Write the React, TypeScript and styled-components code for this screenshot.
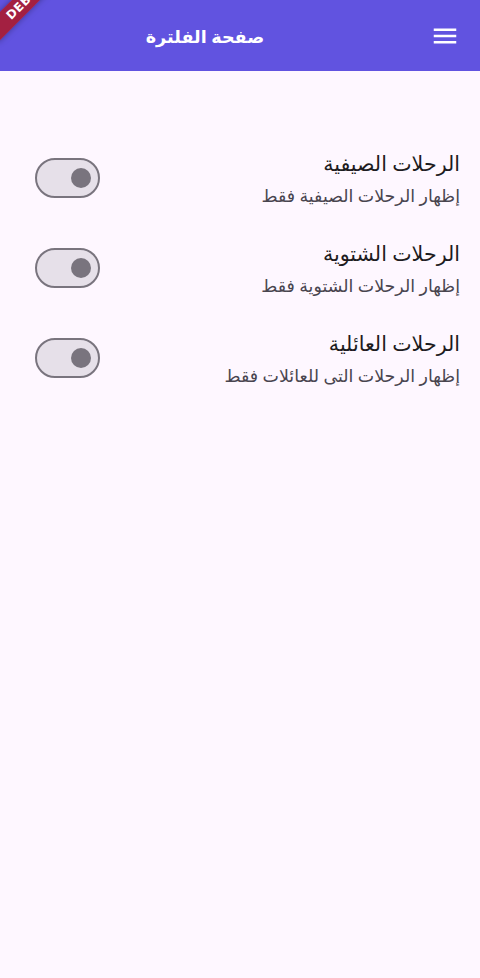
import React, { useState } from "react";
import styled, { createGlobalStyle } from "styled-components";

const GlobalStyle = createGlobalStyle`
  html, body {
    margin: 0;
    padding: 0;
    background: #fef7ff;
  }
  body {
    font-family: "Noto Sans", "DejaVu Sans", sans-serif;
  }
  * { box-sizing: border-box; }
`;

const Page = styled.div`
  position: relative;
  width: 480px;
  min-height: 978px;
  background: #fef7ff;
  direction: rtl;
  overflow: hidden;
`;

const AppBar = styled.header`
  display: flex;
  align-items: center;
  height: 71px;
  background: #6153e0;
  color: #ffffff;
`;

const MenuButton = styled.button`
  width: 70px;
  height: 70px;
  display: flex;
  align-items: center;
  justify-content: center;
  border: none;
  background: transparent;
  padding: 0;
  flex: none;
`;

const Title = styled.h1`
  flex: 1;
  margin: 0;
  text-align: center;
  font-size: 17.6px;
  font-weight: 700;
  color: #ffffff;
`;

const List = styled.main`
  display: flex;
  flex-direction: column;
  padding-top: 62px;
`;

const Row = styled.label`
  display: flex;
  align-items: center;
  height: 90px;
  padding: 0 20px;
  gap: 16px;
  cursor: pointer;
`;

const Texts = styled.div`
  flex: 1;
  display: flex;
  flex-direction: column;
  gap: 8px;
`;

const RowTitle = styled.div`
  font-size: 20.6px;
  line-height: 26px;
  color: #1d1b20;
`;

const RowSubtitle = styled.div`
  font-size: 17.4px;
  line-height: 22px;
  color: #49454f;
`;

const Track = styled.span<{ $on: boolean }>`
  position: relative;
  flex: none;
  width: 65px;
  height: 40px;
  margin-left: 15px;
  border-radius: 20px;
  border: 2.5px solid ${(p) => (p.$on ? "#6153e0" : "#79747e")};
  background: ${(p) => (p.$on ? "#6153e0" : "#e6e0e9")};
`;

const Thumb = styled.span<{ $on: boolean }>`
  position: absolute;
  top: 50%;
  width: ${(p) => (p.$on ? 30 : 20)}px;
  height: ${(p) => (p.$on ? 30 : 20)}px;
  margin-top: ${(p) => (p.$on ? -15 : -10)}px;
  right: ${(p) => (p.$on ? 27 : 7.5)}px;
  border-radius: 50%;
  background: ${(p) => (p.$on ? "#ffffff" : "#79747e")};
`;

const Ribbon = styled.div`
  position: absolute;
  left: -24px;
  top: -10px;
  width: 100px;
  height: 20px;
  transform: rotate(-45deg);
  background: rgba(175, 24, 36, 0.85);
  box-shadow: 0 0 6px rgba(0, 0, 0, 0.35);
  color: #ffffff;
  font-family: "DejaVu Sans", sans-serif;
  font-size: 12px;
  font-weight: 900;
  line-height: 20px;
  text-align: center;
  letter-spacing: 0.5px;
  direction: ltr;
  pointer-events: none;
`;

const MenuIcon = () => (
  <svg width="30" height="30" viewBox="0 0 24 24" fill="#ffffff">
    <path d="M3 18h18v-2H3v2zm0-5h18v-2H3v2zm0-7v2h18V6H3z" />
  </svg>
);

const filters = [
  { title: "الرحلات الصيفية", subtitle: "إظهار الرحلات الصيفية فقط" },
  { title: "الرحلات الشتوية", subtitle: "إظهار الرحلات الشتوية فقط" },
  { title: "الرحلات العائلية", subtitle: "إظهار الرحلات التى للعائلات فقط" },
];

export default function App() {
  const [values, setValues] = useState([false, false, false]);
  return (
    <Page>
      <GlobalStyle />
      <AppBar>
        <MenuButton aria-label="menu">
          <MenuIcon />
        </MenuButton>
        <Title>صفحة الفلترة</Title>
      </AppBar>
      <List>
        {filters.map((f, i) => (
          <Row
            key={f.title}
            onClick={() =>
              setValues((v) => v.map((x, j) => (j === i ? !x : x)))
            }
          >
            <Texts>
              <RowTitle>{f.title}</RowTitle>
              <RowSubtitle>{f.subtitle}</RowSubtitle>
            </Texts>
            <Track $on={values[i]}>
              <Thumb $on={values[i]} />
            </Track>
          </Row>
        ))}
      </List>
      <Ribbon>DEBUG</Ribbon>
    </Page>
  );
}
